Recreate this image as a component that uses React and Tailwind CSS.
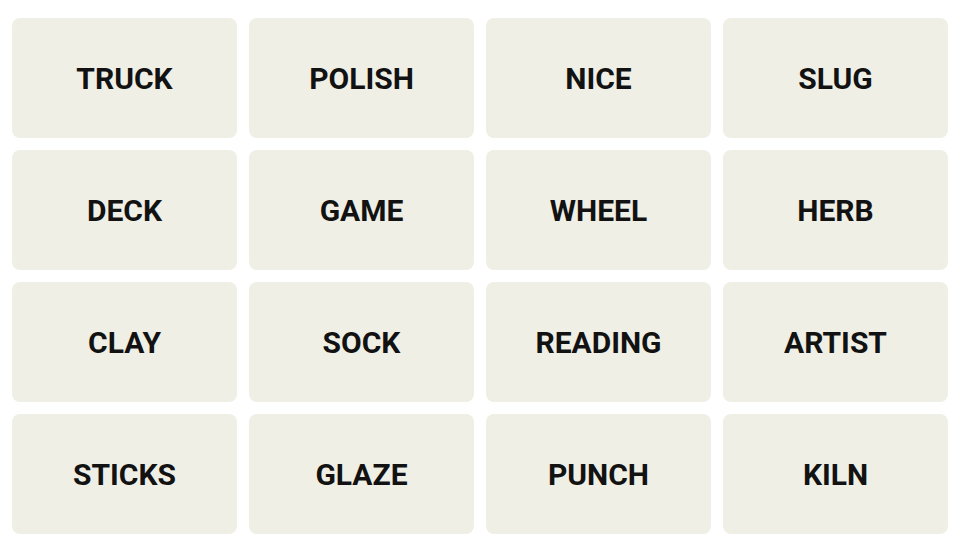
const words = [
  "TRUCK", "POLISH", "NICE", "SLUG",
  "DECK", "GAME", "WHEEL", "HERB",
  "CLAY", "SOCK", "READING", "ARTIST",
  "STICKS", "GLAZE", "PUNCH", "KILN",
];

const App = () => {
  return (
    <div className="w-[962px] h-[546px] bg-white pt-[18px] pl-[12px]">
      <div className="grid grid-cols-[repeat(4,225px)] auto-rows-[120px] gap-[12px]">
        {words.map((w) => (
          <div
            key={w}
            className="bg-[#efefe6] rounded-[8px] flex items-center justify-center text-[30px] font-bold text-[#121212] font-['Roboto',sans-serif]"
          >
            {w}
          </div>
        ))}
      </div>
    </div>
  );
};

export default App;
